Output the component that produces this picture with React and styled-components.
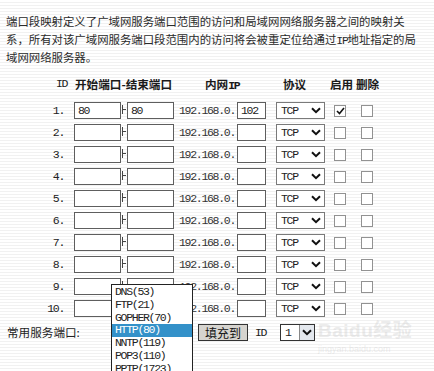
import React from "react";
import styled, { createGlobalStyle } from "styled-components";

const Global = createGlobalStyle`
  html, body { margin: 0; padding: 0; }
  body {
    width: 434px;
    height: 371px;
    overflow: hidden;
    background: repeating-linear-gradient(to bottom, #ffffff 0px, #ffffff 2px, #f1f1f1 2px, #f1f1f1 3px);
    color: #222;
    font-family: "Noto Sans CJK SC", sans-serif;
  }
`;

const MONO = `"Liberation Mono", "Noto Sans CJK SC", monospace`;
const CJK = `"Noto Sans CJK SC", sans-serif`;
const MONO_SIZE = "11.5px";
const MONO_LS = "-1.3px";

const Page = styled.div`
  position: relative;
  width: 434px;
  height: 371px;
  padding-top: 13px;
  box-sizing: border-box;
`;

const Intro = styled.p`
  margin: 0 0 0 6px;
  font-family: ${CJK};
  font-size: 11.4px;
  line-height: 17.5px;
  color: #2a2a2a;
  white-space: nowrap;
`;

const Latin = styled.span`
  font-family: ${MONO};
  font-size: ${MONO_SIZE};
  letter-spacing: ${MONO_LS};
`;

const HeaderRow = styled.div`
  display: flex;
  align-items: center;
  height: 22px;
  margin-top: 6px;
  margin-bottom: 5px;
`;

const HeadCell = styled.div`
  width: ${(p) => p.$w}px;
  flex: none;
  font-family: ${CJK};
  font-size: 11.6px;
  font-weight: 700;
  color: #1a1a1a;
  white-space: nowrap;
`;

const HeadId = styled.div`
  width: 75px;
  padding-left: 56px;
  box-sizing: border-box;
  flex: none;
  font-family: ${MONO};
  font-size: ${MONO_SIZE};
  letter-spacing: ${MONO_LS};
`;

const Rows = styled.div`
  display: flex;
  flex-direction: column;
`;

const Row = styled.div`
  display: flex;
  align-items: center;
  height: 22px;
`;

const IdCell = styled.div`
  width: 64px;
  flex: none;
  text-align: right;
  font-family: ${MONO};
  font-size: ${MONO_SIZE};
  letter-spacing: ${MONO_LS};
  margin-right: 10px;
  color: #222;
`;

const Field = styled.div`
  width: ${(p) => p.$w}px;
  height: 17px;
  flex: none;
  box-sizing: border-box;
  border: 1px solid #5e5e5e;
  background: #fff;
  font-family: ${MONO};
  font-size: ${MONO_SIZE};
  letter-spacing: ${MONO_LS};
  line-height: 15px;
  padding-left: 3px;
  color: #222;
`;

const Dash = styled.div`
  width: 6px;
  height: 17px;
  flex: none;
  position: relative;
  &::before {
    content: "";
    position: absolute;
    left: 1px;
    top: 3px;
    width: 1px;
    height: 9px;
    background: #444;
  }
  &::after {
    content: "";
    position: absolute;
    left: 1px;
    top: 7px;
    width: 4px;
    height: 1px;
    background: #444;
  }
`;

const IpText = styled.div`
  width: 58px;
  flex: none;
  margin-left: 5px;
  font-family: ${MONO};
  font-size: ${MONO_SIZE};
  letter-spacing: ${MONO_LS};
  color: #333;
  white-space: nowrap;
`;

const SelectBox = styled.div`
  width: 49px;
  height: 17px;
  flex: none;
  box-sizing: border-box;
  margin-left: ${(p) => p.$ml || 0}px;
  border: 1px solid #7a7a7a;
  background: #fff;
  display: flex;
  align-items: center;
  justify-content: space-between;
  padding: 0 3px 0 4px;
  font-family: ${MONO};
  font-size: ${MONO_SIZE};
  letter-spacing: ${MONO_LS};
  color: #222;
`;

const Check = styled.div`
  width: 12px;
  height: 12px;
  flex: none;
  box-sizing: border-box;
  border: 1px solid #929292;
  background: #fff;
  margin-left: ${(p) => p.$ml}px;
  display: flex;
  align-items: center;
  justify-content: center;
`;

const Chevron = () => (
  <svg width="10" height="7" viewBox="0 0 10 7">
    <path d="M1 1.2 L5 5.2 L9 1.2" fill="none" stroke="#111" strokeWidth="2" />
  </svg>
);

const Tick = () => (
  <svg width="9" height="8" viewBox="0 0 9 8">
    <path d="M1 4 L3.5 6.5 L8 1" fill="none" stroke="#111" strokeWidth="1.6" />
  </svg>
);

const BottomRow = styled.div`
  display: flex;
  align-items: center;
  height: 23px;
  margin-top: 1px;
`;

const Label = styled.div`
  width: 191px;
  flex: none;
  padding-left: 7px;
  font-family: ${CJK};
  font-size: 11.6px;
  color: #222;
`;

const FillButton = styled.div`
  width: 50px;
  height: 17px;
  box-sizing: border-box;
  flex: none;
  border: 1px solid #333;
  background: #d6d4cf;
  font-family: ${CJK};
  font-size: 12px;
  line-height: 15px;
  text-align: center;
  color: #111;
`;

const SmallLabel = styled.div`
  width: 32px;
  flex: none;
  padding-left: 7px;
  box-sizing: border-box;
  font-family: ${MONO};
  font-size: ${MONO_SIZE};
  letter-spacing: ${MONO_LS};
`;

const IdSelect = styled.div`
  width: 35px;
  height: 17px;
  flex: none;
  box-sizing: border-box;
  border: 1px solid #333;
  background: #fff;
  display: flex;
  align-items: stretch;
  font-family: ${MONO};
  font-size: ${MONO_SIZE};
  letter-spacing: ${MONO_LS};
`;

const IdValue = styled.div`
  flex: 1;
  padding-left: 4px;
  line-height: 15px;
`;

const IdArrow = styled.div`
  width: 14px;
  border-left: 1px solid #888;
  background: #e4e8ee;
  display: flex;
  align-items: center;
  justify-content: center;
`;

const DropList = styled.ul`
  position: absolute;
  left: 111px;
  top: 284px;
  width: 82px;
  height: 100px;
  margin: 0;
  padding: 1px 0 0 0;
  list-style: none;
  box-sizing: border-box;
  background: #fff;
  border: 1px solid #222;
  z-index: 2;
`;

const DropItem = styled.li`
  height: 12.8px;
  line-height: 12.8px;
  padding-left: 3px;
  font-family: ${MONO};
  font-size: ${MONO_SIZE};
  letter-spacing: ${MONO_LS};
  white-space: nowrap;
  color: ${(p) => (p.$active ? "#fff" : "#222")};
  background: ${(p) => (p.$active ? "#3391c9" : "transparent")};
`;

const Watermark = styled.div`
  position: absolute;
  left: 318px;
  top: 318px;
  color: rgba(205, 205, 205, 0.4);
  pointer-events: none;
  z-index: 3;
`;

const WmMain = styled.div`
  font-family: "Liberation Sans", "Noto Sans CJK SC", sans-serif;
  font-size: 19px;
  font-weight: 700;
  line-height: 26px;
  letter-spacing: 0.5px;
`;

const WmSub = styled.div`
  font-family: "Liberation Sans", sans-serif;
  font-size: 9px;
  line-height: 10px;
`;

const rows = Array.from({ length: 10 }, (_, i) => ({
  id: i + 1,
  start: i === 0 ? "80" : "",
  end: i === 0 ? "80" : "",
  ip: i === 0 ? "102" : "",
  enabled: i === 0,
}));

const services = ["DNS(53)", "FTP(21)", "GOPHER(70)", "HTTP(80)", "NNTP(119)", "POP3(110)", "PPTP(1723)"];

export default function App() {
  return (
    <>
      <Global />
      <Page>
        <Intro>
          端口段映射定义了广域网服务端口范围的访问和局域网网络服务器之间的映射关
          <br />
          系，所有对该广域网服务端口段范围内的访问将会被重定位给通过<Latin>IP</Latin>地址指定的局
          <br />
          域网网络服务器。
        </Intro>
        <HeaderRow>
          <HeadId>ID</HeadId>
          <HeadCell $w={130}>开始端口-结束端口</HeadCell>
          <HeadCell $w={78}>内网<Latin>IP</Latin></HeadCell>
          <HeadCell $w={47}>协议</HeadCell>
          <HeadCell $w={26}>启用</HeadCell>
          <HeadCell $w={30}>删除</HeadCell>
        </HeaderRow>
        <Rows>
          {rows.map((r) => (
            <Row key={r.id}>
              <IdCell>{r.id}.</IdCell>
              <Field $w={47}>{r.start}</Field>
              <Dash />
              <Field $w={47}>{r.end}</Field>
              <IpText>192.168.0.</IpText>
              <Field $w={29}>{r.ip}</Field>
              <SelectBox $ml={10}>
                <span>TCP</span>
                <Chevron />
              </SelectBox>
              <Check $ml={9}>{r.enabled && <Tick />}</Check>
              <Check $ml={15} />
            </Row>
          ))}
        </Rows>
        <BottomRow>
          <Label>常用服务端口:</Label>
          <FillButton>填充到</FillButton>
          <SmallLabel>ID</SmallLabel>
          <IdSelect>
            <IdValue>1</IdValue>
            <IdArrow>
              <Chevron />
            </IdArrow>
          </IdSelect>
        </BottomRow>
        <DropList>
          {services.map((s) => (
            <DropItem key={s} $active={s === "HTTP(80)"}>
              {s}
            </DropItem>
          ))}
        </DropList>
        <Watermark>
          <WmMain>Baidu经验</WmMain>
          <WmSub>jingyan.baidu.com</WmSub>
        </Watermark>
      </Page>
    </>
  );
}
